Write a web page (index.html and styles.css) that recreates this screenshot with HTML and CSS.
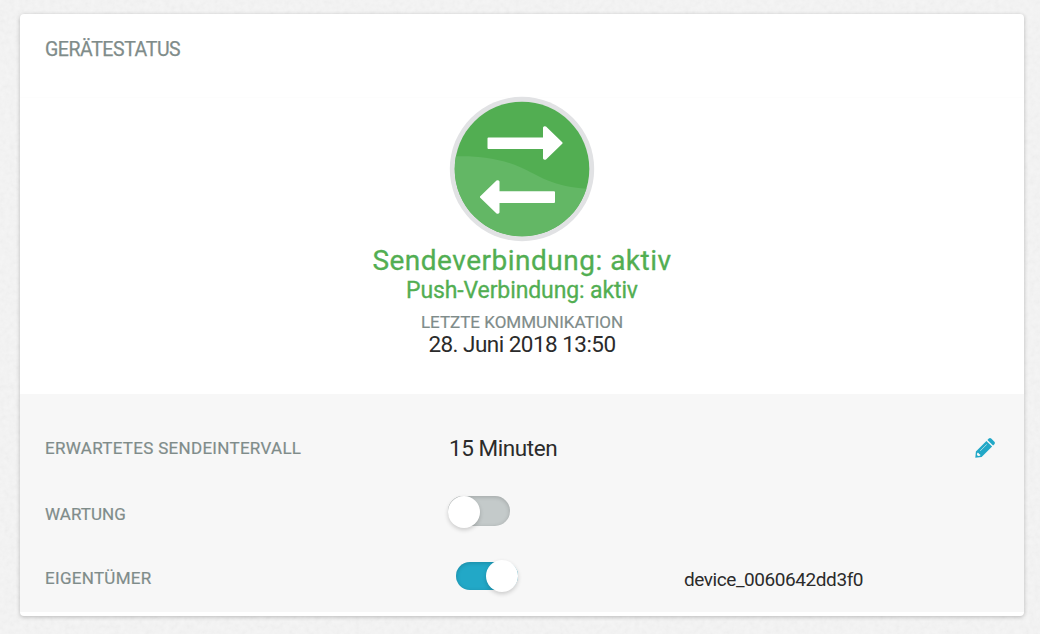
FILE: index.html
```html
<!DOCTYPE html>
<html lang="de">
<head>
<meta charset="utf-8">
<title>Gerätestatus</title>
<link rel="stylesheet" href="styles.css">
</head>
<body>
<svg class="paper" aria-hidden="true">
  <filter id="grain" x="0" y="0" width="100%" height="100%">
    <feTurbulence type="fractalNoise" baseFrequency="0.2" numOctaves="3" seed="4"/>
    <feColorMatrix values="0.05 0 0 0 0.912  0.05 0 0 0 0.912  0.05 0 0 0 0.912  0 0 0 0 1" color-interpolation-filters="sRGB"/>
  </filter>
  <rect width="100%" height="100%" filter="url(#grain)"/>
</svg>
<main class="card">
  <header class="card-header"><h1 class="title">GERÄTESTATUS</h1></header>
  <section class="status">
    <svg class="status-icon" viewBox="0 0 146 146" width="146" height="146">
      <clipPath id="disc"><circle cx="73" cy="73" r="67.3"/></clipPath>
      <circle cx="73" cy="73" r="72.200" fill="#e1e2e4"/>
      <circle cx="73" cy="73" r="67.3" fill="#52ae52"/>
      <path clip-path="url(#disc)" d="M0 60.500C28 59 51 62 72 71.500C90 79.500 105 92.500 146 93V146H0Z" fill="#63b765"/>
      <path d="M39.500 41.500H94V31.500Q95 29.500 97 30.500L113.500 46.500V47.500L97 63.500Q95 64.500 94 62.500V53H39.500Q38.500 53 38.500 52V42.500Q38.500 41.500 39.500 41.500Z" fill="#fff"/>
      <path d="M105 95.200H50.500V85.500Q49.500 83.500 47.500 84.500L31 100.500V101.500L47.500 117.500Q49.500 118.500 50.500 116.500V107H105Q106 107 106 106V96.200Q106 95.200 105 95.200Z" fill="#fff"/>
    </svg>
    <p class="send">Sendeverbindung: aktiv</p>
    <p class="push">Push-Verbindung: aktiv</p>
    <p class="label last">LETZTE KOMMUNIKATION</p>
    <p class="date">28. Juni 2018 13:50</p>
  </section>
  <section class="settings">
    <div class="row">
      <span class="label interval">ERWARTETES SENDEINTERVALL</span>
      <span class="value">15 Minuten</span>
      <button class="edit" aria-label="Bearbeiten">
        <svg viewBox="0 0 20 20" width="20" height="20">
          <path fill="#22a8c7" fill-rule="evenodd" d="M11.400 2.900L17.100 8.600L6.600 19.100L0.300 19.700L0.900 13.400ZM12.400 1.900L13.800.6Q15-.4 16.200.6L19.400 3.800Q20.400 5 19.400 6.200L18.100 7.600ZM2.300 14.700L1.900 16.900L3.100 18.100L5.300 17.700L5.100 16.200L3.900 16.100L3.800 14.900ZM5 12.700L5.400 13.100L11.900 6.600L11.500 6.200Z"/>
        </svg>
      </button>
    </div>
    <div class="row">
      <span class="label maintenance">WARTUNG</span>
      <span class="toggle"><span class="knob"></span></span>
    </div>
    <div class="row">
      <span class="label owner">EIGENTÜMER</span>
      <span class="toggle on"><span class="knob"></span></span>
      <span class="device">device_0060642dd3f0</span>
    </div>
  </section>
</main>
</body>
</html>
```
FILE: styles.css
```css
* { box-sizing: border-box; }
body {
  margin: 0;
  padding: 14px 16px 18px 20px;
  height: 634px;
  overflow: hidden;
  background: #f0f0f0;
  color: #2b2b2b;
  font-family: Roboto, "Liberation Sans", sans-serif;
}
h1, p { margin: 0; font-weight: 400; white-space: nowrap; }
.paper { position: absolute; inset: 0; width: 100%; height: 100%; z-index: -1; }
.card {
  width: 1004px;
  height: 602px;
  display: flex;
  flex-direction: column;
  background: #fff;
  border-radius: 4px;
  box-shadow: 0 1px 4px rgba(0, 0, 0, .24);
}
.card-header {
  height: 83px;
  padding: 22px 25px 0;
}
.title {
  font-size: 19.500px;
  line-height: 27px;
  letter-spacing: -.43px;
  color: #7f8c8a;
  -webkit-text-stroke: .25px;
}
.status {
  height: 297px;
  border-top: 1px solid #fdfdfd;
  display: flex;
  flex-direction: column;
  align-items: center;
}
.status-icon { flex: none; margin-top: -2px; }
.label {
  font-size: 17px;
  line-height: 22px;
  color: #7f8c8a;
  -webkit-text-stroke: .2px;
}
.send, .push { color: #52ae52; }
.send {
  font-size: 28px;
  line-height: 36px;
  margin-top: 1px;
  letter-spacing: .5px;
  -webkit-text-stroke: .3px;
}
.push {
  font-size: 23px;
  line-height: 26px;
  margin-top: -1px;
  letter-spacing: -.12px;
  -webkit-text-stroke: .3px;
}
.last { margin-top: 7px; }
.date { font-size: 22.500px; line-height: 22px; letter-spacing: -.53px; }
.settings {
  height: 218px;
  padding: 21px 25px 0;
  background: #f7f7f7;
}
.row {
  height: 65px;
  display: grid;
  grid-template-columns: 403px 236px 1fr;
  align-items: center;
  white-space: nowrap;
}
.interval { letter-spacing: .3px; }
.maintenance { padding-top: 2px; letter-spacing: .05px; }
.owner { letter-spacing: .3px; }
.value { font-size: 22.500px; line-height: 26px; padding-left: 1px; letter-spacing: -.43px; }
.edit {
  width: 20px;
  height: 20px;
  padding: 0;
  border: 0;
  background: none;
  justify-self: end;
  margin-right: 4px;
}
.edit svg { display: block; }
.toggle {
  width: 62px;
  height: 30px;
  margin-bottom: 4px;
  display: flex;
  border-radius: 15px;
  background: #c4caca;
  box-shadow: inset 0 1px 4px rgba(0, 0, 0, .18);
}
.knob {
  width: 32px;
  height: 32px;
  flex: none;
  border-radius: 50%;
  background: #fff;
  box-shadow: 0 2px 4px rgba(0, 0, 0, .18);
}
.toggle.on {
  height: 28px;
  margin-left: 8px;
  justify-content: flex-end;
  align-items: center;
  background: #22a8c7;
}
.device { font-size: 19px; line-height: 24px; padding-top: 4px; letter-spacing: -.43px; }
```
